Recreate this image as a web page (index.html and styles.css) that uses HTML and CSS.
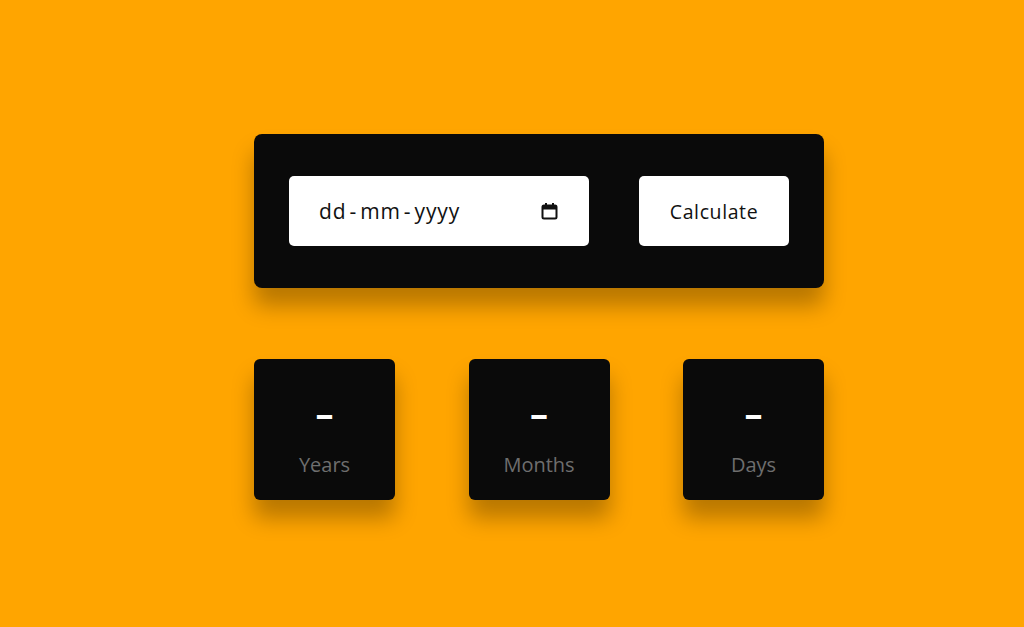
FILE: index.html
```html
<!DOCTYPE html>
<html lang="en">
<head>
<meta charset="utf-8">
<title>Age Calculator</title>
<link rel="stylesheet" href="styles.css">
</head>
<body>
<div class="wrap">
  <div class="card">
    <div class="date-input">
      <span class="date-text">dd<span class="sep">-</span>mm<span class="sep">-</span>yyyy</span>
      <svg class="cal" width="17" height="18" viewBox="0 0 17 18">
        <rect x="1.5" y="3.5" width="14" height="13" rx="1.5" fill="none" stroke="#111" stroke-width="2"/>
        <rect x="1.5" y="3.5" width="14" height="4" fill="#111"/>
        <rect x="4" y="1" width="2" height="3" fill="#111"/>
        <rect x="11" y="1" width="2" height="3" fill="#111"/>
      </svg>
    </div>
    <button class="btn">Calculate</button>
  </div>
  <div class="results">
    <div class="box"><span class="val">–</span><span class="lbl">Years</span></div>
    <div class="box"><span class="val">–</span><span class="lbl">Months</span></div>
    <div class="box"><span class="val">–</span><span class="lbl">Days</span></div>
  </div>
</div>
</body>
</html>
```
FILE: styles.css
```css
* { box-sizing: border-box; }
html, body { margin: 0; padding: 0; }
body {
  background: #ffa500;
  font-family: "Open Sans", "Lato", sans-serif;
  min-height: 627px;
}
.wrap {
  width: 570px;
  margin-left: 254px;
  padding-top: 134px;
}
.card {
  background: #0a0a0a;
  border-radius: 8px;
  padding: 42px 35px;
  display: flex;
  justify-content: space-between;
  box-shadow: 0 18px 22px rgba(0, 0, 0, 0.28);
}
.date-input {
  width: 300px;
  height: 70px;
  background: #fff;
  border-radius: 5px;
  display: flex;
  align-items: center;
  justify-content: space-between;
  padding: 0 31px 0 30px;
}
.date-text {
  font-size: 21px;
  color: #111;
  letter-spacing: 0.9px;
}
.sep {
  display: inline-block;
  margin: 0 3px;
}
.cal { display: block; }
.btn {
  width: 150px;
  height: 70px;
  background: #fff;
  border: none;
  border-radius: 5px;
  font-family: inherit;
  font-size: 19.5px;
  letter-spacing: 0.6px;
  color: #111;
  padding: 0;
}
.results {
  margin-top: 71px;
  display: flex;
  justify-content: space-between;
}
.box {
  width: 141px;
  height: 141px;
  background: #0a0a0a;
  border-radius: 6px;
  box-shadow: 0 18px 22px rgba(0, 0, 0, 0.28);
  display: flex;
  flex-direction: column;
  align-items: center;
  padding-top: 32px;
}
.val {
  color: #fff;
  font-size: 36px;
  font-weight: 700;
  line-height: 46px;
}
.lbl {
  color: #6e6e6e;
  font-size: 20px;
  line-height: 28px;
  margin-top: 14px;
}
```
